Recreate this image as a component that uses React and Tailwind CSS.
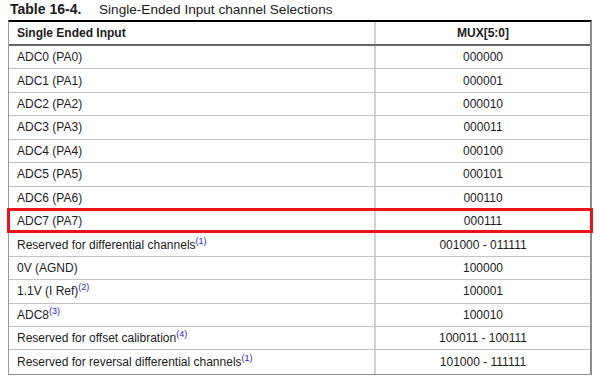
const rows = [
  ["ADC0 (PA0)", null, "000000"],
  ["ADC1 (PA1)", null, "000001"],
  ["ADC2 (PA2)", null, "000010"],
  ["ADC3 (PA3)", null, "000011"],
  ["ADC4 (PA4)", null, "000100"],
  ["ADC5 (PA5)", null, "000101"],
  ["ADC6 (PA6)", null, "000110"],
  ["ADC7 (PA7)", null, "000111", true],
  ["Reserved for differential channels", "(1)", "001000 - 011111"],
  ["0V (AGND)", null, "100000"],
  ["1.1V (I Ref)", "(2)", "100001"],
  ["ADC8", "(3)", "100010"],
  ["Reserved for offset calibration", "(4)", "100011 - 100111"],
  ["Reserved for reversal differential channels", "(1)", "101000 - 111111"],
];

export default function App() {
  return (
    <div className="w-[600px] h-[387px] bg-white text-[#1c1c1c] font-['Liberation_Sans',Arial,sans-serif] overflow-hidden">
      {/* title */}
      <div className="h-[20px] flex items-center pl-[10px] leading-[19px] pb-[2px]">
        <span className="font-bold text-[14px] w-[89px]">Table 16-4.</span>
        <span className="text-[13.6px]">Single-Ended Input channel Selections</span>
      </div>

      {/* table */}
      <div className="ml-[8px] w-[584px] border-t-2 border-t-black border-l-[1.5px] border-l-[#9a9a9a] border-r-2 border-r-[#8c8c8c] border-b-[1.5px] border-b-[#8c8c8c] text-[12px]">
        <div className="flex h-[24px] border-b-2 border-b-[#666] font-bold">
          <div className="w-[367px] pl-[8px] flex items-center border-r-2 border-r-[#d2d2d2]">
            Single Ended Input
          </div>
          <div className="flex-1 flex items-center justify-center">MUX[5:0]</div>
        </div>

        {rows.map(([label, note, mux, hl]) => (
          <div
            key={label}
            className="relative flex h-[23.43px] border-b border-b-[#c4c4c4] last:border-b-0"
          >
            <div className="w-[367px] pl-[8px] flex items-center border-r-2 border-r-[#d2d2d2]">
              <span>
                {label}
                {note && (
                  <sup className="text-[9px] text-[#2a2ad0] -top-[5px]">{note}</sup>
                )}
              </span>
            </div>
            <div className="flex-1 flex items-center justify-center">{mux}</div>
            {hl && (
              <div className="absolute -left-[2px] -right-[3px] -top-[2px] -bottom-[1px] border-[3px] border-[#e8141b]" />
            )}
          </div>
        ))}
      </div>
    </div>
  );
}
